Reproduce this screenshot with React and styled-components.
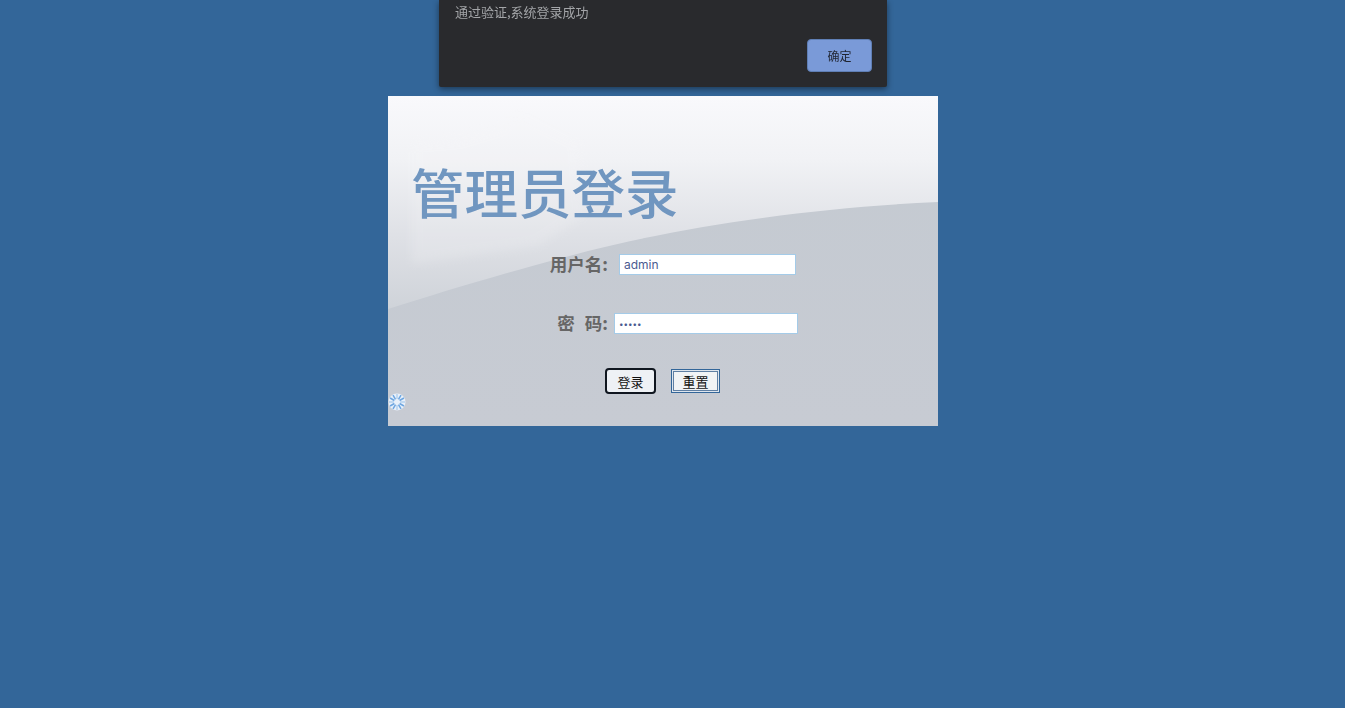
import React from "react";
import styled, { createGlobalStyle } from "styled-components";

const GlobalStyle = createGlobalStyle`
  html, body {
    margin: 0;
    padding: 0;
    height: 100%;
    background: #336699;
  }
  body {
    font-family: "Liberation Sans", "Noto Sans CJK SC", sans-serif;
  }
`;

const CJK = `"Noto Sans CJK SC", "Liberation Sans", sans-serif`;

const Page = styled.div`
  min-height: 708px;
  padding: 96px 0 0 388px;
  box-sizing: border-box;
  overflow: hidden;
`;

const Alert = styled.div`
  position: fixed;
  top: 0;
  left: 439px;
  width: 448px;
  height: 87px;
  box-sizing: border-box;
  padding: 3px 16px 0;
  background: #292a2d;
  border-radius: 0 0 2px 2px;
  box-shadow: 0 2px 6px rgba(0, 0, 0, 0.45);
`;

const AlertText = styled.div`
  font-family: ${CJK};
  font-size: 13px;
  line-height: 18px;
  color: #a3a5a8;
`;

const AlertActions = styled.div`
  display: flex;
  justify-content: flex-end;
  margin: 18px -1px 0 0;
`;

const OkButton = styled.button`
  width: 65px;
  height: 33px;
  padding: 0;
  border: 1px solid #5f7fb5;
  border-radius: 4px;
  background: #7a9ad8;
  color: #1f2430;
  font-family: ${CJK};
  font-size: 12px;
`;

const Panel = styled.div`
  position: relative;
  width: 550px;
  height: 330px;
  overflow: hidden;
  background: #c7cbd3;
`;

const Backdrop = styled.svg`
  position: absolute;
  inset: 0;
  width: 100%;
  height: 100%;
`;

const Content = styled.div`
  position: relative;
  display: flex;
  flex-direction: column;
`;

const Title = styled.h1`
  margin: 59px 0 0 23px;
  font-family: ${CJK};
  font-size: 53.5px;
  line-height: 72px;
  font-weight: 500;
  color: #7096c0;
`;

const Row = styled.div`
  display: flex;
  align-items: center;
  height: 21px;
  margin-top: ${(p) => p.$top}px;
`;

const Label = styled.label`
  width: 220px;
  flex-shrink: 0;
  margin-top: -3px;
  text-align: right;
  font-family: ${CJK};
  font-size: 17.5px;
  font-weight: 700;
  color: #666;
  white-space: pre;
  word-spacing: ${(p) => p.$spread || 0}px;
`;

const Input = styled.input`
  box-sizing: border-box;
  width: ${(p) => p.$width}px;
  height: 21px;
  margin-left: ${(p) => p.$left}px;
  padding: 0 4px;
  border: 1px solid #a4cbe8;
  background: #fff;
  color: #4a5a90;
  font-family: "Inter", "Liberation Sans", sans-serif;
  font-size: ${(p) => (p.type === "password" ? 8 : 12)}px;
`;

const Buttons = styled.div`
  display: flex;
  align-items: center;
  height: 26px;
  margin: 34px 0 0 217px;
  gap: 15px;
`;

const LoginButton = styled.button`
  box-sizing: border-box;
  width: 51px;
  height: 26px;
  padding: 0;
  border: 2px solid #10161f;
  border-radius: 4px;
  background: #eef1f5;
  color: #111;
  font-family: ${CJK};
  font-size: 13px;
`;

const ResetButton = styled.button`
  box-sizing: border-box;
  width: 49px;
  height: 24px;
  padding: 0;
  border: 1px solid #336699;
  box-shadow: inset 0 0 0 1px #dfe6ee, inset 0 0 0 2px #5f7fa3;
  background: #f1f3f5;
  color: #111;
  font-family: ${CJK};
  font-size: 13px;
`;

const Spinner = styled.svg`
  position: absolute;
  left: 0;
  top: 297px;
  width: 18px;
  height: 18px;
`;

const SPOKES = [0, 30, 60, 90, 120, 150, 180, 210, 240, 270, 300, 330];

function App() {
  return (
    <Page>
      <GlobalStyle />
      <Alert>
        <AlertText>通过验证,系统登录成功</AlertText>
        <AlertActions>
          <OkButton>确定</OkButton>
        </AlertActions>
      </Alert>
      <Panel>
        <Backdrop viewBox="0 0 550 330" preserveAspectRatio="none">
          <defs>
            <linearGradient id="sky" x1="0" y1="0" x2="0" y2="1">
              <stop offset="0" stopColor="#f9f9fc" />
              <stop offset="0.3" stopColor="#f1f2f5" />
              <stop offset="0.65" stopColor="#dfe1e6" />
              <stop offset="1" stopColor="#cfd3d9" />
            </linearGradient>
            <linearGradient id="hill" x1="0" y1="0" x2="0" y2="1">
              <stop offset="0" stopColor="#c4cad1" />
              <stop offset="1" stopColor="#c7cbd3" />
            </linearGradient>
            <filter id="soft" x="-10%" y="-10%" width="120%" height="120%">
              <feGaussianBlur stdDeviation="5" />
            </filter>
          </defs>
          <rect width="550" height="330" fill="url(#hill)" />
          <path d="M0 0H550V106C420 112 300 130 200 155C120 176 60 194 0 213Z" fill="url(#sky)" />
          <path
            d="M24 46L70 42L110 30L130 14L190 44L196 120L150 150L24 168Z"
            fill="#f6f6f8"
            opacity="0.22"
            filter="url(#soft)"
          />
        </Backdrop>
        <Content>
          <Title>管理员登录</Title>
          <Row $top={27}>
            <Label>用户名:</Label>
            <Input $left={11} $width={177} defaultValue="admin" />
          </Row>
          <Row $top={38}>
            <Label $spread={1}>{"密  码:"}</Label>
            <Input $left={6} $width={184} type="password" defaultValue="admin" />
          </Row>
          <Buttons>
            <LoginButton>登录</LoginButton>
            <ResetButton>重置</ResetButton>
          </Buttons>
        </Content>
        <Spinner viewBox="0 0 18 18">
          <circle cx="9" cy="9" r="8.5" fill="#e8f0fa" />
          {SPOKES.map((a, i) => (
            <line
              key={a}
              x1="9"
              y1="6"
              x2="9"
              y2="1"
              stroke={i % 3 === 0 ? "#b5d2ee" : "#6ea6e0"}
              strokeWidth="1.5"
              transform={`rotate(${a} 9 9)`}
            />
          ))}
        </Spinner>
      </Panel>
    </Page>
  );
}

export default App;
